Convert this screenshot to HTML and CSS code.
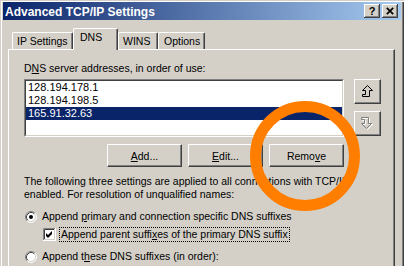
FILE: index.html
```html
<!DOCTYPE html>
<html>
<head>
<meta charset="utf-8">
<title>Advanced TCP/IP Settings</title>
<link rel="stylesheet" href="styles.css">
</head>
<body>
<div class="window">
  <div class="titlebar">
    <span class="title">Advanced TCP/IP Settings</span>
    <div class="tbtns">
      <span class="tbtn help">?</span>
      <span class="tbtn close"><svg width="8" height="8" viewBox="0 0 8 8"><path d="M0.8 0.8 L7.2 7.2 M7.2 0.8 L0.8 7.2" stroke="#000" stroke-width="1.7" fill="none"/></svg></span>
    </div>
  </div>
  <div class="content">
    <div class="tabs">
      <div class="tab t-ip">IP Settings</div>
      <div class="tab t-dns sel">DNS</div>
      <div class="tab t-wins">WINS</div>
      <div class="tab t-opt">Options</div>
    </div>
    <div class="panel">
      <div class="label">D<u>N</u>S server addresses, in order of use:</div>
      <div class="listrow">
        <div class="listbox">
          <div class="listinner">
            <div class="item">128.194.178.1</div>
            <div class="item">128.194.198.5</div>
            <div class="item selected">165.91.32.63</div>
          </div>
        </div>
        <div class="arrows">
          <div class="btn sq">
            <svg width="12" height="13" viewBox="0 0 12 13"><path d="M5.5 0.5 L10.5 5.5 H7.5 V11.5 H0.5 V9.5 H3.5 V5.5 H0.5 Z" fill="none" stroke="#000" stroke-width="1"/></svg>
          </div>
          <div class="btn sq">
            <svg width="13" height="14" viewBox="0 0 13 14"><path d="M6.5 12.5 L11.5 7.5 H8.5 V1.5 H1.5 V3.5 H4.5 V7.5 H1.5 Z" fill="none" stroke="#fff" stroke-width="1"/><path d="M5.5 11.5 L10.5 6.5 H7.5 V0.5 H0.5 V2.5 H3.5 V6.5 H0.5 Z" fill="none" stroke="#808080" stroke-width="1"/></svg>
          </div>
        </div>
      </div>
      <div class="btnrow">
        <div class="btn pbtn"><u>A</u>dd...</div>
        <div class="btn pbtn"><u>E</u>dit...</div>
        <div class="btn pbtn">Remo<u>v</u>e</div>
      </div>
      <p class="desc">The following three settings are applied to all connections with TCP/IP<br>enabled. For resolution of unqualified names:</p>
      <div class="opt opt1">
        <svg class="radio" width="12" height="12" viewBox="0 0 12 12">
          <circle cx="6" cy="6" r="5" fill="#fff"/>
          <path d="M2.11 9.89 A5.5 5.5 0 0 1 9.89 2.11" stroke="#808080" fill="none"/>
          <path d="M9.89 2.11 A5.5 5.5 0 0 1 2.11 9.89" stroke="#fff" fill="none"/>
          <path d="M2.82 9.18 A4.5 4.5 0 0 1 9.18 2.82" stroke="#404040" fill="none"/>
          <path d="M9.18 2.82 A4.5 4.5 0 0 1 2.82 9.18" stroke="#d4d0c8" fill="none"/>
          <circle cx="6" cy="6" r="2" fill="#000"/>
        </svg>
        <span class="otext">Append <u>p</u>rimary and connection specific DNS suffixes</span>
      </div>
      <div class="opt opt2">
        <svg class="check" width="13" height="13" viewBox="0 0 13 13">
          <rect x="0" y="0" width="13" height="13" fill="#fff"/>
          <path d="M0.5 12 V0.5 H12" stroke="#808080" fill="none"/>
          <path d="M1.5 11 V1.5 H11" stroke="#404040" fill="none"/>
          <path d="M0 12.5 H12.5 V0" stroke="#fff" fill="none"/>
          <path d="M1 11.5 H11.5 V1" stroke="#d4d0c8" fill="none"/>
          <polygon points="3,5 5,7 9,3 9,6 5,10 3,8" fill="#000"/>
        </svg>
        <span class="focus">Append parent suffi<u>x</u>es of the primary DNS suffix</span>
      </div>
      <div class="opt opt3">
        <svg class="radio" width="12" height="12" viewBox="0 0 12 12">
          <circle cx="6" cy="6" r="5" fill="#fff"/>
          <path d="M2.11 9.89 A5.5 5.5 0 0 1 9.89 2.11" stroke="#808080" fill="none"/>
          <path d="M9.89 2.11 A5.5 5.5 0 0 1 2.11 9.89" stroke="#fff" fill="none"/>
          <path d="M2.82 9.18 A4.5 4.5 0 0 1 9.18 2.82" stroke="#404040" fill="none"/>
          <path d="M9.18 2.82 A4.5 4.5 0 0 1 2.82 9.18" stroke="#d4d0c8" fill="none"/>
        </svg>
        <span class="otext">Append t<u>h</u>ese DNS suffixes (in order):</span>
      </div>
    </div>
  </div>
</div>
<svg class="highlight" width="404" height="266" viewBox="0 0 404 266">
  <circle cx="305" cy="156" r="49.5" fill="none" stroke="#ff7e00" stroke-width="11"/>
</svg>
</body>
</html>
```

FILE: styles.css
```css
* { box-sizing: border-box; }
html, body { margin: 0; padding: 0; }
body {
  width: 404px;
  height: 266px;
  overflow: hidden;
  position: relative;
  background: #d4d0c8;
  font-family: "Liberation Sans", Arial, sans-serif;
  font-size: 10.5px;
  line-height: 13px;
  color: #000;
}
.window {
  height: 266px;
  padding: 2px 3px 0 3px;
  background: #d4d0c8;
  box-shadow: inset 1px 1px 0 #d4d0c8, inset 2px 2px 0 #fff, inset -1px 0 0 #404040, inset -2px 0 0 #808080;
}
.titlebar {
  height: 18px;
  display: flex;
  align-items: center;
  padding: 0 3px 0 2px;
  background: linear-gradient(to right, #0a246a, #a6caf0);
}
.title {
  color: #fff;
  font-weight: bold;
  font-size: 12px;
  line-height: 18px;
  padding-top: 1px;
  white-space: nowrap;
}
.tbtns {
  margin-left: auto;
  display: flex;
  gap: 2px;
}
.tbtn {
  width: 16px;
  height: 14px;
  background: #d4d0c8;
  box-shadow: inset -1px -1px 0 #404040, inset 1px 1px 0 #fff, inset -2px -2px 0 #808080;
  display: flex;
  align-items: center;
  justify-content: center;
  font-weight: bold;
  font-size: 11px;
  line-height: 14px;
}
.tbtn svg { display: block; margin-top: -1px; }
.content {
  padding: 8px 0 0 5px;
}
.tabs {
  display: flex;
  align-items: flex-end;
  height: 21px;
  padding-left: 4px;
  position: relative;
  z-index: 1;
}
.tab {
  height: 17px;
  padding-top: 2px;
  border-top: 1px solid #fff;
  border-left: 1px solid #fff;
  border-right: 1px solid #404040;
  border-radius: 2px 2px 0 0;
  box-shadow: inset -1px 0 0 #808080;
  background: #d4d0c8;
  white-space: nowrap;
}
.tab.sel {
  height: 22px;
  margin-bottom: -1px;
}
.t-ip { width: 61px; padding-left: 4px; }
.t-dns { width: 45px; padding-left: 6px; }
.t-wins { width: 40px; padding-left: 4px; }
.t-opt { width: 47px; padding-left: 5px; }
.panel {
  width: 387px;
  height: 220px;
  border-top: 1px solid #fff;
  border-left: 1px solid #fff;
  border-right: 1px solid #404040;
  box-shadow: inset -1px 0 0 #808080;
  padding: 12px 0 0 15px;
}
.label { white-space: nowrap; }
.listrow {
  display: flex;
  margin-top: 4px;
}
.listbox {
  width: 320px;
  height: 58px;
  border: 1px solid;
  border-color: #808080 #fff #fff #808080;
}
.listinner {
  height: 100%;
  border: 1px solid;
  border-color: #404040 #d4d0c8 #d4d0c8 #404040;
  background: #fff;
}
.item {
  height: 13px;
  line-height: 13px;
  font-size: 11px;
  padding-left: 2px;
  white-space: nowrap;
}
.item.selected {
  background: #0a246a;
  color: #fff;
}
.arrows {
  margin-left: 10px;
  display: flex;
  flex-direction: column;
  gap: 7px;
}
.btn {
  background: #d4d0c8;
  border: 1px solid;
  border-color: #fff #404040 #404040 #fff;
  box-shadow: inset -1px -1px 0 #808080;
  display: flex;
  align-items: center;
  justify-content: center;
  white-space: nowrap;
}
.sq { width: 27px; height: 25px; }
.sq svg { display: block; }
.btnrow {
  display: flex;
  justify-content: flex-end;
  gap: 6px;
  width: 320px;
  margin-top: 7px;
}
.pbtn { width: 75px; height: 23px; padding-top: 1px; }
.desc {
  margin: 8px 0 0;
  white-space: nowrap;
}
.opt {
  display: flex;
  align-items: center;
  white-space: nowrap;
}
.opt1 { margin-top: 9px; height: 13px; }
.opt2 { margin-top: 4px; height: 15px; padding-left: 19px; }
.opt3 { margin-top: 8px; height: 13px; }
.radio { display: block; margin-left: 1px; flex: none; }
.check { display: block; flex: none; }
.otext { margin-left: 5px; }
.focus {
  margin-left: 3px;
  height: 15px;
  padding: 0 1px;
  border: 1px dotted #000;
  line-height: 13px;
}
.highlight {
  position: absolute;
  left: 0;
  top: 0;
  pointer-events: none;
}
```
